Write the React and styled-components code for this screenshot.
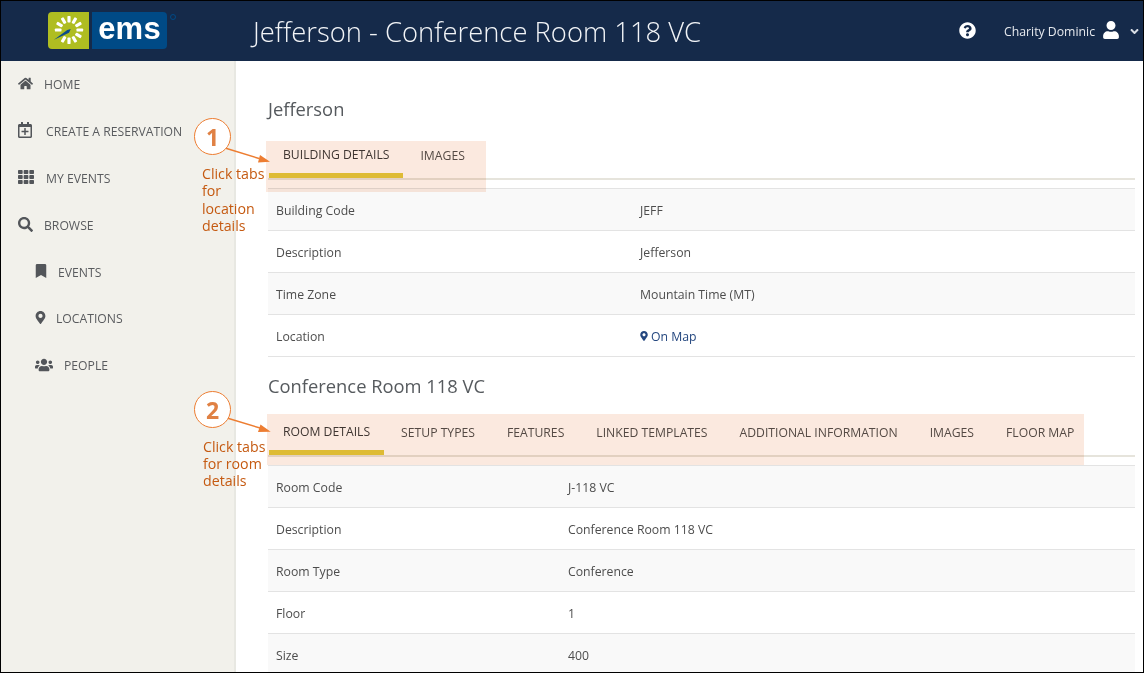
import React from "react";
import styled, { createGlobalStyle } from "styled-components";
import {
  FaHome, FaRegCalendarPlus, FaTh, FaSearch, FaBookmark, FaMapMarkerAlt,
  FaUsers, FaQuestionCircle, FaUser, FaAngleDown,
} from "react-icons/fa";

const Global = createGlobalStyle`
  html, body { margin: 0; padding: 0; background: #fff; }
  body { font-family: "Open Sans", "Liberation Sans", sans-serif; }
  * { box-sizing: border-box; }
`;

const Frame = styled.div`
  position: relative;
  width: 1144px;
  height: 673px;
  border: 1px solid #000;
  overflow: hidden;
  display: flex;
  flex-direction: column;
  background: #fff;
`;

const Header = styled.header`
  flex: 0 0 60px;
  background: #152a4a;
  display: flex;
  align-items: center;
  color: #fff;
`;

const Logo = styled.div`
  display: flex;
  gap: 3px;
  margin: -2px 0 0 47px;
  width: 205px;
  position: relative;
`;

const LogoSun = styled.div`
  width: 41px;
  height: 37px;
  background: #afbd21;
  border-radius: 4px 0 0 4px;
  display: flex;
  align-items: center;
  justify-content: center;
`;

const LogoWord = styled.div`
  width: 75px;
  height: 37px;
  background: #004a86;
  border-radius: 0 4px 4px 0;
  font-family: "Liberation Sans", Arial, sans-serif;
  font-weight: 700;
  font-size: 31px;
  line-height: 33px;
  text-align: center;
  letter-spacing: 0.2px;
`;

const Reg = styled.span`
  position: absolute;
  left: 122px;
  top: 2px;
  width: 6px;
  height: 6px;
  border: 1px solid #004a86;
  border-radius: 50%;
`;

const Title = styled.h1`
  margin: 0;
  flex: 1;
  font-size: 27.4px;
  font-weight: 300;
  line-height: 60px;
  color: #f2f4f7;
  white-space: nowrap;
  position: relative;
  top: 1px;
`;

const UserArea = styled.div`
  display: flex;
  align-items: center;
  font-size: 12.25px;
  color: #e6e9ee;
  margin-right: 2px;
`;

const HelpIcon = styled(FaQuestionCircle)`
  font-size: 17px;
  color: #fff;
  margin-right: 28px;
  position: relative;
  top: -1px;
`;

const UserIcon = styled(FaUser)`
  font-size: 18px;
  color: #fff;
  margin: 0 8px 0 7px;
  position: relative;
  top: -1px;
`;

const Caret = styled(FaAngleDown)`
  font-size: 13px;
  color: #d8dde5;
`;

const Body = styled.div`
  flex: 1;
  display: flex;
  min-height: 0;
`;

const Sidebar = styled.nav`
  flex: 0 0 235px;
  background: #f2f1eb;
  border-right: 2px solid #e8e8e2;
`;

const NavItem = styled.div`
  height: 46.9px;
  display: flex;
  align-items: center;
  padding-left: ${(p) => p.$indent}px;
  font-size: 12.2px;
  color: #595b5e;
  white-space: nowrap;
`;

const NavIconBox = styled.span`
  flex: 0 0 ${(p) => p.$w}px;
  display: flex;
  align-items: center;
  font-size: ${(p) => p.$size}px;
  color: #53565a;
  position: relative;
  top: -1px;
`;

const Main = styled.main`
  flex: 1;
  padding: 35px 8px 0 32px;
  overflow: hidden;
`;

const SectionTitle = styled.h2`
  margin: ${(p) => p.$top || 0}px 0 0;
  font-size: 18.35px;
  font-weight: 400;
  line-height: 26px;
  color: #565a5e;
`;

const TabBar = styled.div`
  display: flex;
  height: ${(p) => p.$h}px;
  margin-top: ${(p) => p.$top}px;
  border-bottom: 2px solid #e6e4dc;
  padding-left: 1px;
`;

const Tab = styled.div`
  height: 100%;
  padding: ${(p) => p.$pt}px ${(p) => (p.$active ? 14 : 16)}px 0;
  margin-right: ${(p) => (p.$active ? 1 : 0)}px;
  font-size: 12.2px;
  line-height: 16px;
  white-space: nowrap;
  color: ${(p) => (p.$active ? "#3f3a38" : "#55504d")};
  border-bottom: ${(p) => (p.$active ? "5px solid #e2cd3c" : "0")};
`;

const Rows = styled.div`
  margin-top: ${(p) => p.$top}px;
  border-top: 1px solid #e3e3e3;
`;

const Row = styled.div`
  height: 42px;
  display: grid;
  grid-template-columns: ${(p) => p.$col}px 1fr;
  align-items: center;
  padding: 2px 0 0 8px;
  font-size: 12.25px;
  color: #4d4d4d;
  background: ${(p) => (p.$odd ? "#f9f9f9" : "#fff")};
  border-bottom: 1px solid #e3e3e3;
`;

const MapLink = styled.span`
  color: #24477f;
  display: inline-flex;
  align-items: center;
  gap: 2px;
  margin-left: -1px;
`;

const Highlight = styled.div`
  position: absolute;
  left: ${(p) => p.$x}px;
  top: ${(p) => p.$y}px;
  width: ${(p) => p.$w}px;
  height: ${(p) => p.$h}px;
  background: #fbe9df;
  mix-blend-mode: multiply;
  pointer-events: none;
`;

const Badge = styled.div`
  position: absolute;
  left: ${(p) => p.$x}px;
  top: ${(p) => p.$y}px;
  width: 37px;
  height: 37px;
  border: 1.3px solid #ed7d31;
  border-radius: 50%;
  background: #fff;
  display: flex;
  align-items: center;
  justify-content: center;
  font-size: 23px;
  font-weight: 700;
  color: #e08144;
`;

const Note = styled.div`
  position: absolute;
  left: ${(p) => p.$x}px;
  top: ${(p) => p.$y}px;
  font-size: 14.2px;
  line-height: ${(p) => p.$lh}px;
  color: #c55a11;
  white-space: pre;
`;

const Arrow = styled.svg`
  position: absolute;
  left: 0;
  top: 0;
  pointer-events: none;
`;

const SunMark = () => {
  const rays = [0, 30, 60, 90, 120, 150, 180, 210, 270, 300, 330];
  return (
    <svg width="30" height="30" viewBox="0 0 34 34">
      {rays.map((a) => (
        <rect key={a} x="15.2" y="1" width="3.6" height="7.5" rx="1" fill="#fff" transform={`rotate(${a} 17 17)`} />
      ))}
      <path d="M0 28 L15 17 L19 16 L17 20 Z" fill="#0b4a8c" />
    </svg>
  );
};

const navItems = [
  { label: "HOME", Icon: FaHome, indent: 17, w: 26, size: 15 },
  { label: "CREATE A RESERVATION", Icon: FaRegCalendarPlus, indent: 16, w: 29, size: 16 },
  { label: "MY EVENTS", Icon: FaTh, indent: 17, w: 28, size: 16 },
  { label: "BROWSE", Icon: FaSearch, indent: 17, w: 26, size: 15 },
  { label: "EVENTS", Icon: FaBookmark, indent: 33, w: 24, size: 14 },
  { label: "LOCATIONS", Icon: FaMapMarkerAlt, indent: 33, w: 22, size: 13 },
  { label: "PEOPLE", Icon: FaUsers, indent: 34, w: 29, size: 18 },
];

const buildingRows = [
  ["Building Code", "JEFF"],
  ["Description", "Jefferson"],
  ["Time Zone", "Mountain Time (MT)"],
  ["Location", <MapLink key="m"><FaMapMarkerAlt size={10} />On Map</MapLink>],
];

const roomRows = [
  ["Room Code", "J-118 VC"],
  ["Description", "Conference Room 118 VC"],
  ["Room Type", "Conference"],
  ["Floor", "1"],
  ["Size", "400"],
];

const roomTabs = ["SETUP TYPES", "FEATURES", "LINKED TEMPLATES", "ADDITIONAL INFORMATION", "IMAGES", "FLOOR MAP"];

export default function App() {
  return (
    <>
      <Global />
      <Frame>
        <Header>
          <Logo>
            <LogoSun><SunMark /></LogoSun>
            <LogoWord>ems</LogoWord>
            <Reg />
          </Logo>
          <Title>Jefferson - Conference Room 118 VC</Title>
          <UserArea>
            <HelpIcon />
            Charity Dominic
            <UserIcon />
            <Caret />
          </UserArea>
        </Header>
        <Body>
          <Sidebar>
            {navItems.map(({ label, Icon, indent, w, size }) => (
              <NavItem key={label} $indent={indent}>
                <NavIconBox $w={w} $size={size}><Icon /></NavIconBox>
                {label}
              </NavItem>
            ))}
          </Sidebar>
          <Main>
            <SectionTitle>Jefferson</SectionTitle>
            <TabBar $h={39} $top={19}>
              <Tab $active $pt={6}>BUILDING DETAILS</Tab>
              <Tab $pt={7}>IMAGES</Tab>
            </TabBar>
            <Rows $top={8}>
              {buildingRows.map(([k, v], i) => (
                <Row key={k} $col={364} $odd={i % 2 === 0}>
                  <span>{k}</span>
                  <span>{v}</span>
                </Row>
              ))}
            </Rows>
            <SectionTitle $top={16}>Conference Room 118 VC</SectionTitle>
            <TabBar $h={39} $top={19}>
              <Tab $active $pt={6}>ROOM DETAILS</Tab>
              {roomTabs.map((t) => <Tab key={t} $pt={7}>{t}</Tab>)}
            </TabBar>
            <Rows $top={8}>
              {roomRows.map(([k, v], i) => (
                <Row key={k} $col={292} $odd={i % 2 === 0}>
                  <span>{k}</span>
                  <span>{v}</span>
                </Row>
              ))}
            </Rows>
          </Main>
        </Body>

        <Highlight $x={265} $y={140} $w={220} $h={51} />
        <Highlight $x={266} $y={413} $w={817} $h={51} />
        <Arrow width="1143" height="672">
          <path d="M224 147 L258 157.5" stroke="#ed7d31" strokeWidth="1.4" fill="none" />
          <path d="M269 160.7 L257 161.5 L259 154 Z" fill="#ed7d31" />
          <path d="M226 417 L259 427" stroke="#ed7d31" strokeWidth="1.4" fill="none" />
          <path d="M269.7 430.7 L257 431 L259.5 423.5 Z" fill="#ed7d31" />
        </Arrow>
        <Badge $x={193} $y={117}>1</Badge>
        <Badge $x={193} $y={390}>2</Badge>
        <Note $x={201} $y={164} $lh={17.4}>{"Click tabs\nfor\nlocation\ndetails"}</Note>
        <Note $x={202} $y={437} $lh={17}>{"Click tabs\nfor room\ndetails"}</Note>
      </Frame>
    </>
  );
}
